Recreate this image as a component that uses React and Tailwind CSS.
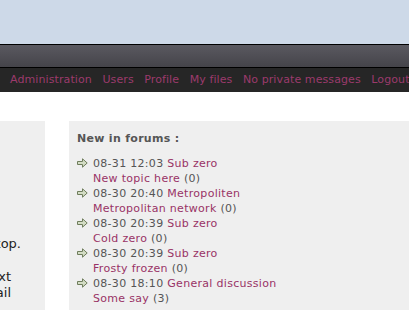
import React from "react";

const navLinks = ["Administration", "Users", "Profile", "My files", "No private messages", "Logout"];

const posts = [
  { date: "08-31 12:03", forum: "Sub zero", topic: "New topic here", count: 0 },
  { date: "08-30 20:40", forum: "Metropoliten", topic: "Metropolitan network", count: 0 },
  { date: "08-30 20:39", forum: "Sub zero", topic: "Cold zero", count: 0 },
  { date: "08-30 20:39", forum: "Sub zero", topic: "Frosty frozen", count: 0 },
  { date: "08-30 18:10", forum: "General discussion", topic: "Some say", count: 3 },
];

// small outlined arrow used in front of every forum post
const Arrow = () => (
  <svg width="11" height="10" viewBox="0 0 11 10" className="shrink-0">
    <path
      d="M0.5 3.5 H5.5 V0.8 L10.2 5 L5.5 9.2 V6.5 H0.5 Z"
      fill="#d3dcc4"
      stroke="#6f7d5c"
      strokeWidth="1"
      strokeLinejoin="round"
    />
  </svg>
);

export default function App() {
  return (
    <div className="w-[409px] h-[310px] overflow-hidden bg-white font-['DejaVu_Sans',Verdana,sans-serif]">
      {/* header */}
      <div className="h-[44px] bg-[#cdd9e8]" />
      <div className="h-[24px] border-y border-black bg-gradient-to-b from-[#5a5960] to-[#45444a]" />
      <div className="h-[24px] bg-[#262626] flex items-center gap-[10.5px] pl-[10px] text-[11px] tracking-[0.1px] text-[#9c3a6c] whitespace-nowrap">
        {navLinks.map((l) => (
          <span key={l}>{l}</span>
        ))}
      </div>

      {/* content */}
      <div className="flex gap-[24px] pt-[29px]">
        <div className="w-[45px] h-[200px] bg-[#efefef] overflow-hidden flex flex-col items-end pt-[115px] text-[13px] leading-[16px] text-[#222]">
          <div className="pr-[24px] whitespace-nowrap">desktop.</div>
          <div className="h-[17px]" />
          <div className="pr-[34px] whitespace-nowrap">next</div>
          <div className="pr-[34px] whitespace-nowrap">detail</div>
        </div>

        <div className="flex-1 h-[200px] bg-[#efefef] pl-[8px] pt-[10px] text-[11px] leading-[15px] tracking-[0.3px]">
          <div className="font-bold text-[#555] mb-[10px]">New in forums :</div>
          {posts.map((p, i) => (
            <div key={i} className="flex items-start">
              <div className="w-[16px] pt-[2px]">
                <Arrow />
              </div>
              <div>
                <div className="text-[#555]">
                  {p.date} <span className="text-[#993366]">{p.forum}</span>
                </div>
                <div>
                  <span className="text-[#993366]">{p.topic}</span>{" "}
                  <span className="text-[#555]">({p.count})</span>
                </div>
              </div>
            </div>
          ))}
        </div>
      </div>
    </div>
  );
}
